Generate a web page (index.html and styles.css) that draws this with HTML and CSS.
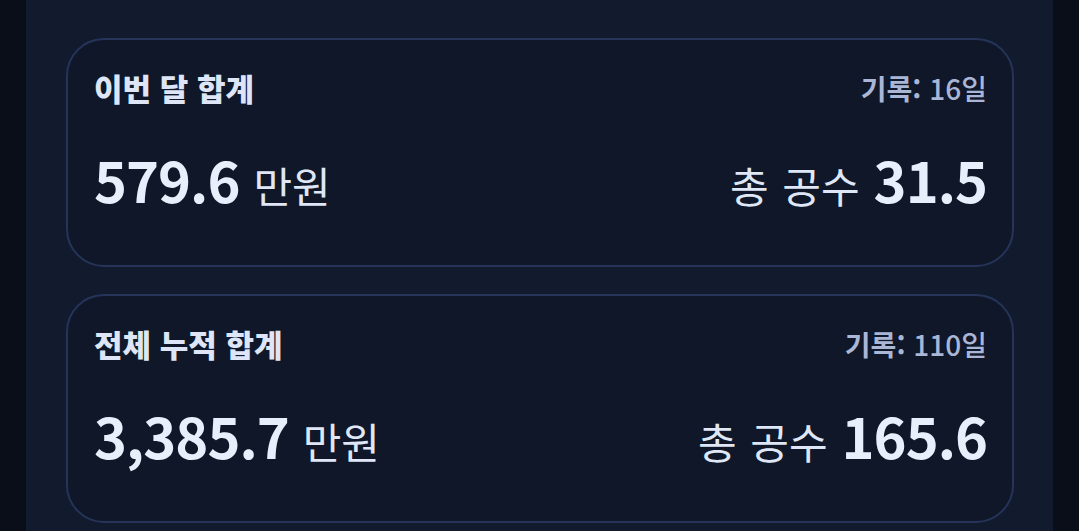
FILE: index.html
```html
<!DOCTYPE html>
<html lang="ko">
<head>
    <meta charset="UTF-8">
    <meta name="viewport" content="width=device-width, initial-scale=1.0">
    <title>합계</title>
    <link rel="stylesheet" href="styles.css">
</head>
<body>
    <div class="panel">
        <div class="summary-card">
            <div class="card-head">
                <h3 class="card-title">이번 달 합계</h3>
                <div class="record"><b>기록:</b> 16일</div>
            </div>
            <div class="card-body">
                <div class="figure"><span class="num">579.6</span><span class="unit">만원</span></div>
                <div class="figure"><span class="unit">총 공수</span><span class="num">31.5</span></div>
            </div>
        </div>

        <div class="summary-card">
            <div class="card-head">
                <h3 class="card-title">전체 누적 합계</h3>
                <div class="record"><b>기록:</b> 110일</div>
            </div>
            <div class="card-body">
                <div class="figure"><span class="num">3,385.7</span><span class="unit">만원</span></div>
                <div class="figure"><span class="unit">총 공수</span><span class="num">165.6</span></div>
            </div>
        </div>
    </div>
</body>
</html>
```

FILE: styles.css
```css
body {
    margin: 0;
    background: #0a0e18;
    font-family: "Noto Sans CJK KR", "Noto Sans", sans-serif;
    height: 531px;
    overflow: hidden;
}

.panel {
    margin: 0 26px;
    height: 100%;
    box-sizing: border-box;
    background: #121a2d;
    padding: 38px 39px 0 40px;
    display: flex;
    flex-direction: column;
    gap: 27px;
}

.summary-card {
    flex-shrink: 0;
    border: 2px solid #26345a;
    border-radius: 38px;
    background: #0f1729;
    height: 229px;
    box-sizing: border-box;
    padding: 25px 25px 0 26px;
}

.card-head {
    display: flex;
    justify-content: space-between;
    align-items: center;
}

.card-title {
    margin: 0;
    font-size: 31px;
    font-weight: 900;
    color: #dde5f6;
}

.record {
    font-size: 28px;
    font-weight: 500;
    color: #aab6d6;
}

.record b {
    font-weight: bold;
}

.card-body {
    display: flex;
    justify-content: space-between;
    align-items: baseline;
    margin-top: 28px;
}

.figure {
    display: flex;
    align-items: baseline;
    gap: 14px;
}

.num {
    font-size: 56px;
    font-weight: bold;
    color: #e8effc;
    letter-spacing: -1px;
}

.unit {
    font-size: 42px;
    color: #dfe7f7;
    word-spacing: 2px;
}
```
